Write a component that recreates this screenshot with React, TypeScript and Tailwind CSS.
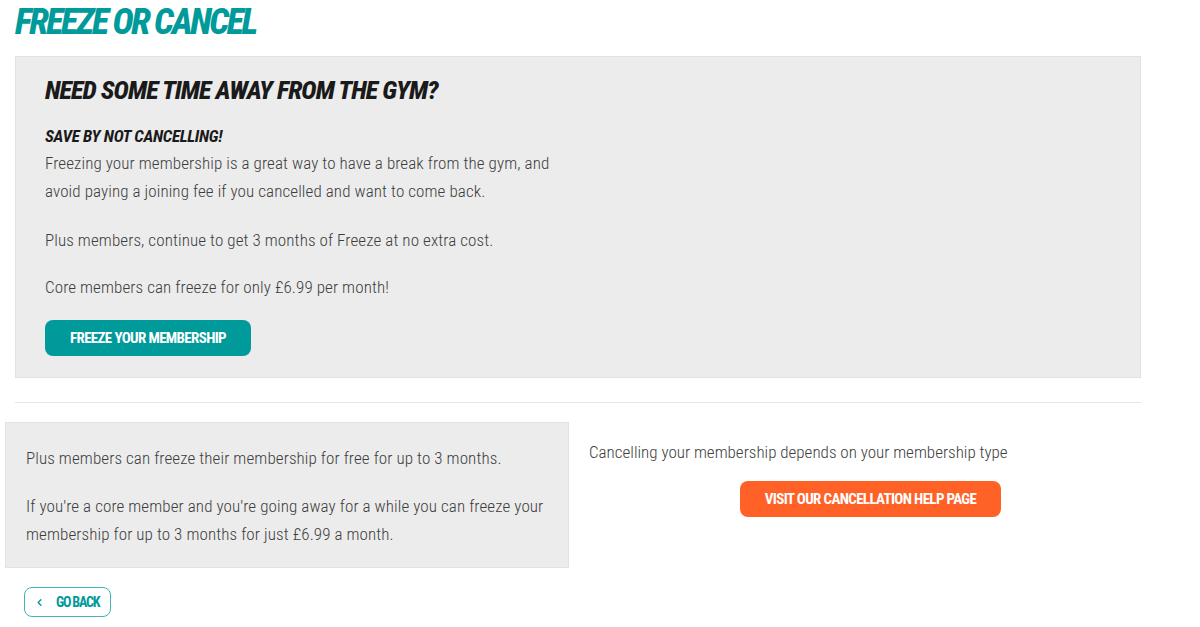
import { ChevronLeft } from 'lucide-react';

export default function App() {
  return (
    <div className="min-h-[627px] bg-white text-[#333] font-['Roboto',sans-serif] font-stretch-condensed">
      <div className="w-[1141px]">
        <h1 className="pl-[15px] pt-[4px] text-[36px] leading-[36px] font-extrabold italic text-[#009a9a] tracking-[-2.4px]">
          FREEZE OR CANCEL
        </h1>

        <div className="ml-[15px] mt-[16px] border border-[#e2e2e2] bg-[#ececec] px-[29px] pt-[18px] pb-[21px]">
          <h2 className="text-[26px] leading-[30px] font-extrabold italic text-[#1a1a1a] tracking-[-0.9px]">
            NEED SOME TIME AWAY FROM THE GYM?
          </h2>
          <p className="mt-[21px] text-[17px] leading-[20px] font-bold italic text-[#1a1a1a] tracking-[-0.3px]">
            SAVE BY NOT CANCELLING!
          </p>
          <p className="mt-[3px] text-[17px] leading-[28px] font-light text-[#3d3d3d] tracking-[0.1px]">
            Freezing your membership is a great way to have a break from the gym, and
            <br />
            avoid paying a joining fee if you cancelled and want to come back.
          </p>
          <p className="mt-[21px] text-[17px] leading-[28px] font-light text-[#3d3d3d] tracking-[0.1px]">
            Plus members, continue to get 3 months of Freeze at no extra cost.
          </p>
          <p className="mt-[19px] text-[17px] leading-[28px] font-light text-[#3d3d3d] tracking-[0.1px]">
            Core members can freeze for only £6.99 per month!
          </p>
          <button className="mt-[19px] h-[36px] w-[206px] rounded-[8px] bg-[#009a9a] text-[15px] font-bold text-white tracking-[-0.65px]">
            FREEZE YOUR MEMBERSHIP
          </button>
        </div>

        <div className="ml-[15px] mt-[24px] h-px bg-[#e5e5e5]" />

        <div className="mt-[19px] flex">
          <div className="ml-[5px] w-[564px] border border-[#e2e2e2] bg-[#ececec] px-[20px] pt-[21px] pb-[19px] text-[17px] leading-[28px] font-light text-[#3d3d3d] tracking-[0.1px]">
            <p className="whitespace-nowrap">Plus members can freeze their membership for free for up to 3 months.</p>
            <p className="mt-[20px] whitespace-nowrap">
              If you're a core member and you're going away for a while you can freeze your
              <br />
              membership for up to 3 months for just £6.99 a month.
            </p>
          </div>
          <div className="ml-[20px] flex-1 pt-[16px]">
            <p className="text-[17px] leading-[28px] font-light text-[#3d3d3d]">
              Cancelling your membership depends on your membership type
            </p>
            <div className="mt-[15px] flex pl-[151px]">
              <button className="h-[36px] w-[261px] rounded-[8px] bg-[#ff6127] text-[15px] font-bold text-white tracking-[-0.65px]">
                VISIT OUR CANCELLATION HELP PAGE
              </button>
            </div>
          </div>
        </div>

        <div className="mt-[19px] pl-[24px]">
          <button className="flex h-[30px] w-[87px] items-center gap-[11px] whitespace-nowrap rounded-[8px] border border-[#3fb6b6] pl-[9px] text-[14px] font-bold text-[#009a9a] tracking-[-1.2px]">
            <ChevronLeft size={11} strokeWidth={3} />
            GO BACK
          </button>
        </div>
      </div>
    </div>
  );
}
